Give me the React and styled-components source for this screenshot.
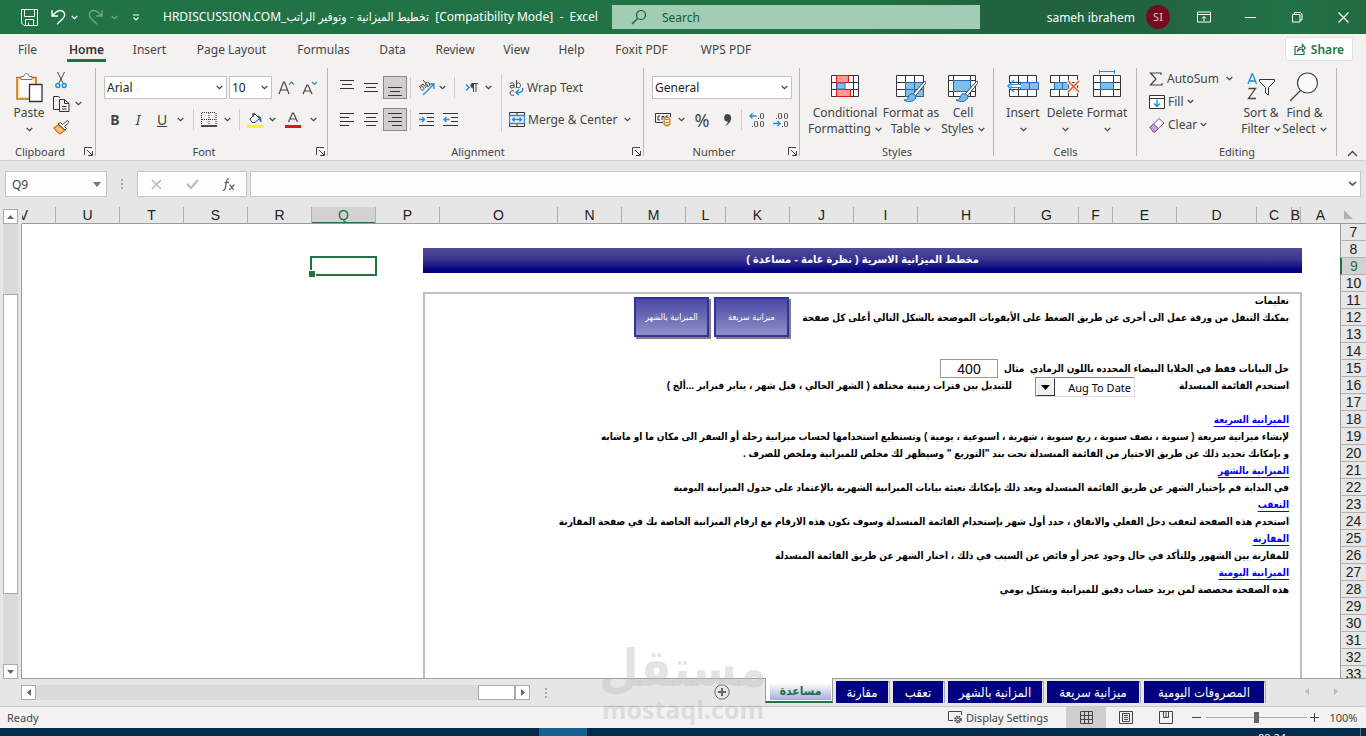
import React from "react";
import styled, { createGlobalStyle, css } from "styled-components";

const ui = '"Noto Sans", "DejaVu Sans Condensed", "DejaVu Sans", sans-serif';
const cellFont = '"Liberation Sans", "DejaVu Sans Condensed", "DejaVu Sans", sans-serif';
const ink = "#444";
const blue = "#1e8bdc";

const Global = createGlobalStyle`
  * { box-sizing: border-box; }
  body { margin: 0; font-family: ${ui}; font-size: 12px; color: ${ink}; }
  button, input, select { font: inherit; color: inherit; margin: 0; padding: 0; border: 0; background: none; outline: 0; border-radius: 0; }
  select { appearance: none; }
  svg { display: block; flex: none; }
  a { color: inherit; text-decoration: none; }
`;

const Window = styled.div`
  display: flex;
  flex-direction: column;
  height: 100vh;
  overflow: hidden;
  background: #e6e6e6;
`;

/* ---------- title bar ---------- */
const TitleBar = styled.header`
  flex: none;
  display: flex;
  align-items: center;
  height: 34px;
  color: #fff;
  background: linear-gradient(90deg, #217346 62%, #22633f 72%, #22633f 84%, #217346 94%, #22693f);
`;
const QuickTools = styled.div`
  display: flex;
  flex: none;
  align-items: center;
  padding-left: 10px;
  width: 163px;
`;
const PlainButton = styled.button`
  display: flex;
  align-items: center;
  justify-content: center;
  flex: none;
  width: ${(p) => p.$w || 20}px;
  height: ${(p) => p.$h || 22}px;
  opacity: ${(p) => (p.$dim ? 0.35 : 1)};
`;
const DocTitle = styled.h1`
  margin: 0;
  flex: 0 0 449px;
  font-size: 12px;
  line-height: 20px;
  font-weight: 400;
  white-space: pre;
`;
const SearchBox = styled.label`
  display: flex;
  align-items: center;
  flex: 1 1 368px;
  max-width: 640px;
  height: 24px;
  padding-left: 19px;
  gap: 15px;
  background: #a0cdb4;
  color: #0e5c2f;
  input { flex: 1; min-width: 0; }
  input::placeholder { color: #0e5c2f; opacity: 1; }
`;
const Account = styled.div`
  flex: 0 0 190px;
  margin-left: auto;
  display: flex;
  align-items: center;
  justify-content: flex-end;
  gap: 11px;
`;
const Avatar = styled.span`
  width: 24px;
  height: 24px;
  border-radius: 50%;
  background: #750b1c;
  line-height: 24px;
  font-size: 11px;
  text-align: center;
  color: #e3c4c8;
`;
const WindowTools = styled.div`
  display: flex;
  flex: none;
  padding-left: 11px;
`;

/* ---------- ribbon tabs ---------- */
const TabRow = styled.nav`
  flex: none;
  display: flex;
  align-items: center;
  height: 32px;
  padding: 0 13px 0 16px;
  background: #f3f2f1;
`;
const RibbonTab = styled.a`
  display: flex;
  justify-content: center;
  width: ${(p) => p.$w}px;
  margin-right: 28px;
  height: 24px;
  line-height: 24px;
  white-space: nowrap;
  font-weight: ${(p) => (p.$active ? 600 : 400)};
  color: ${(p) => (p.$active ? "#333" : ink)};
  border-bottom: 3px solid ${(p) => (p.$active ? "#217346" : "transparent")};
`;
const ShareButton = styled.button`
  display: flex;
  align-items: center;
  justify-content: center;
  gap: 5px;
  margin-left: auto;
  width: 68px;
  height: 24px;
  margin-bottom: 2px;
  background: #fff;
  border: 1px solid #e1dfdd;
  border-radius: 3px;
  font-weight: 600;
  color: #217346;
`;

/* ---------- ribbon ---------- */
const Ribbon = styled.section`
  flex: none;
  display: flex;
  height: 95px;
  background: #f3f2f1;
  border-bottom: 1px solid #cfcdcb;
`;
const Group = styled.div`
  display: flex;
  flex-direction: column;
  flex: none;
  position: relative;
  width: ${(p) => p.$w}px;
  &::after {
    content: "";
    position: absolute;
    right: 0;
    top: 2px;
    bottom: 4px;
    border-right: 1px solid #b9b7b5;
  }
`;
const GroupBody = styled.div`
  flex: 1;
  display: flex;
  padding-left: ${(p) => p.$pad || 0}px;
`;
const GroupFoot = styled.div`
  display: flex;
  align-items: center;
  height: 17px;
  font-size: 11px;
  span { flex: 1; text-align: center; }
`;
const Rows = styled.div`
  display: flex;
  flex-direction: column;
  gap: ${(p) => (p.$gap === undefined ? 9 : p.$gap)}px;
  padding-top: ${(p) => (p.$top === undefined ? 10 : p.$top)}px;
`;
const Row = styled.div`
  display: flex;
  align-items: center;
  height: 23px;
  gap: ${(p) => p.$gap || 0}px;
`;
const Tool = styled(PlainButton)`
  height: 23px;
  width: ${(p) => p.$w || 24}px;
  font-size: ${(p) => p.$size || 14}px;
  ${(p) =>
    p.$pressed &&
    css`
      background: #d2d0ce;
      border: 1px solid #8f858f;
    `}
`;
const Split = styled.span`
  flex: none;
  width: 1px;
  height: ${(p) => p.$h || 21}px;
  margin: ${(p) => p.$top || 0}px ${(p) => p.$r || 6}px 0 ${(p) => p.$l || 6}px;
  background: #d0cecc;
`;
const PickerBox = styled.label`
  display: flex;
  align-items: center;
  flex: none;
  width: ${(p) => p.$w}px;
  height: 23px;
  padding: 0 3px 0 2px;
  background: #fff;
  border: 1px solid #c4c2c0;
  color: #222;
  select { flex: 1; min-width: 0; }
`;
const TextTool = styled.button`
  display: flex;
  align-items: center;
  height: 23px;
  gap: ${(p) => p.$gap || 3}px;
  white-space: nowrap;
`;
const BigTool = styled.button`
  display: flex;
  flex-direction: column;
  align-items: center;
  flex: none;
  width: ${(p) => p.$w}px;
  height: 74px;
  line-height: 16px;
  white-space: nowrap;
`;
const BigArt = styled.span`
  display: flex;
  justify-content: center;
  height: 39px;
  padding-top: ${(p) => p.$top}px;
`;
const BigLine = styled.span`
  display: flex;
  align-items: center;
  gap: 4px;
  min-height: 16px;
`;
const Collapse = styled.button`
  margin-left: auto;
  align-self: flex-end;
  width: 28px;
  height: 14px;
  display: flex;
  justify-content: center;
  align-items: center;
`;

/* ---------- formula bar ---------- */
const FormulaBar = styled.section`
  flex: none;
  display: flex;
  height: 46px;
  padding: 10px 5px 10px 5px;
`;
const Field = styled.div`
  display: flex;
  align-items: center;
  border: 1px solid #c6c6c6;
  background: #fdfdfd;
  width: ${(p) => p.$w || "auto"};
  flex: ${(p) => (p.$w ? "none" : 1)};
  input { flex: 1; min-width: 0; padding-left: 6px; }
`;
const Grip = styled.span`
  display: flex;
  flex-direction: column;
  justify-content: center;
  align-items: center;
  gap: 2px;
  width: ${(p) => p.$w}px;
  i { width: 2px; height: 2px; background: #aaa; }
`;

/* ---------- sheet ---------- */
const WorkArea = styled.main`
  flex: 1;
  min-height: 0;
  display: flex;
`;
const VScroll = styled.div`
  flex: none;
  width: 21px;
  padding: 2px 3px 0;
  display: flex;
  flex-direction: column;
`;
const ScrollButton = styled.button`
  flex: none;
  width: 15px;
  height: 15px;
  display: flex;
  align-items: center;
  justify-content: center;
  background: #fff;
  border: 1px solid #ababab;
`;
const Track = styled.div`
  flex: 1;
  display: flex;
  flex-direction: ${(p) => (p.$vertical ? "column" : "row")};
  justify-content: ${(p) => (p.$vertical ? "flex-start" : "flex-end")};
  background: #dadad9;
  padding-top: ${(p) => (p.$vertical ? 70 : 0)}px;
`;
const Thumb = styled.span`
  background: #fff;
  border: 1px solid #ababab;
  width: ${(p) => p.$w}px;
  height: ${(p) => p.$h};
`;
const SheetPane = styled.div`
  flex: 1;
  min-width: 0;
  display: flex;
  flex-direction: column;
  direction: rtl;
`;
const ColumnHeads = styled.div`
  flex: none;
  display: flex;
  height: 17px;
  margin-left: 1px;
  overflow: hidden;
  border-bottom: 1px solid #9b9b9b;
`;
const ColumnHead = styled.div`
  flex: none;
  width: ${(p) => p.$w}px;
  height: 17px;
  border-left: 1px solid #b1b1b1;
  font: 14px/17px ${cellFont};
  text-align: center;
  color: #222;
  ${(p) =>
    p.$on &&
    css`
      background: #d2d2d2;
      color: #217346;
      box-shadow: inset 0 -2px #217346;
    `}
`;
const Canvas = styled.div`
  flex: 1;
  min-height: 0;
  position: relative;
  overflow: hidden;
  display: flex;
  flex-direction: column;
  padding: 24px 38px 0 0;
  background: #fff;
  border-left: 1px solid #9b9b9b;
  border-bottom: 1px solid #9b9b9b;
  color: #000;
  font-family: ${cellFont};
`;
const Selection = styled.div`
  position: absolute;
  right: 963px;
  top: 32px;
  width: 67px;
  height: 20px;
  border: 2px solid #217346;
  &::after {
    content: "";
    position: absolute;
    left: -3px;
    bottom: -3px;
    width: 6px;
    height: 6px;
    background: #217346;
    border: 1px solid #fff;
    border-width: 1px 1px 0 0;
  }
`;
const Banner = styled.h2`
  flex: none;
  margin: 0;
  width: 879px;
  height: 25px;
  line-height: 23px;
  font-size: 11px;
  font-weight: 700;
  text-align: center;
  color: #fff;
  background: linear-gradient(#544a9c, #3a3590 45%, #000080 90%);
`;
const HelpBox = styled.article`
  flex: 1 0 auto;
  width: 879px;
  margin-top: 19px;
  padding: 0 11px 0 0;
  border: 2px solid #bfbfbf;
  border-bottom: 0;
  font-size: 10px;
  font-weight: 700;
`;
const Line = styled.p`
  display: flex;
  align-items: ${(p) => (p.$top ? "flex-start" : "center")};
  margin: 0;
  height: 17px;
  line-height: 17px;
  white-space: pre;
`;
const Intro = styled.div`
  display: flex;
  height: 66px;
`;
const IntroText = styled.div`
  width: 498px;
  margin-top: -2px;
`;
const NavShape = styled.button`
  margin: 3px 2px 0 3px;
  width: 75px;
  height: 40px;
  border: 2px solid #333399;
  background: linear-gradient(#4a48a4, #8f8fc8);
  box-shadow: 2px 2px #808080;
  color: #fff;
  font-size: 9px;
  font-weight: 400;
`;
const Slot = styled.span`
  flex: none;
  width: ${(p) => p.$w}px;
`;
const SampleInput = styled.input`
  width: 58px;
  height: 19px;
  border: 1px solid #999;
  background: #fff;
  text-align: center;
  font: 400 14px ${cellFont};
`;
const PeriodBox = styled.label`
  display: flex;
  direction: ltr;
  flex: none;
  width: 100px;
  height: 20px;
  margin-left: 23px;
  border: 1px solid #888;
  border-right-color: #ddd;
  border-bottom-color: #ddd;
  background: #fff;
  select { flex: 1; min-width: 0; text-align: right; padding-right: 3px; font: 400 11px ${ui}; color: #000; }
`;
const PeriodArrow = styled.span`
  width: 19px;
  display: flex;
  align-items: center;
  justify-content: center;
  background: #f0f0f0;
  border: 1px solid #fff;
  border-right-color: #333;
  border-bottom-color: #333;
`;
const HelpLink = styled.a`
  color: #0000ff;
  text-decoration: underline;
  text-underline-offset: 3px;
`;
const RowHeads = styled.div`
  flex: none;
  width: 26px;
  overflow: hidden;
  border-bottom: 1px solid #9b9b9b;
`;
const Corner = styled.div`
  display: flex;
  align-items: flex-end;
  height: 17px;
  padding: 0 0 4px 4px;
  border-bottom: 1px solid #9b9b9b;
`;
const RowHead = styled.div`
  height: 17px;
  border-bottom: 1px solid #b1b1b1;
  border-left: ${(p) => (p.$on ? "2px solid #217346" : "1px solid #9b9b9b")};
  background: ${(p) => (p.$on ? "#d2d2d2" : "#e6e6e6")};
  color: ${(p) => (p.$on ? "#217346" : "#222")};
  font: 14px/17px ${cellFont};
  text-align: center;
`;

/* ---------- sheet tabs ---------- */
const SheetBar = styled.section`
  flex: none;
  display: flex;
  position: relative;
  height: 28px;
  padding-left: 21px;
  border-bottom: 1px solid #c6c6c6;
`;
const HScroll = styled.div`
  display: flex;
  width: 509px;
  height: 15px;
  margin-top: 6px;
`;
const AddSheet = styled.button`
  display: flex;
  margin: 5px 35px 0 auto;
  height: 16px;
`;
const SheetTabs = styled.div`
  display: flex;
  height: 25px;
  margin-top: -1px;
`;
const SheetTab = styled.button`
  width: ${(p) => p.$w}px;
  height: 22px;
  margin: 3px 1px 0 3px;
  background: #000080;
  color: #fff;
  font: 13px/20px ${ui};
  & + & { margin-left: 4px; }
  box-shadow: 2px 1px 0 -1px #e6e6e6, 2px 0 0 0 #aaa;
`;
const ActiveTab = styled.button`
  width: 68px;
  height: 25px;
  padding: 4px 1px 1px 4px;
  background: #fff;
  border: 1px solid #9b9b9b;
  border-top: 0;
  border-bottom: 2px solid #217346;
  color: #217346;
  font-weight: 700;
  span {
    display: block;
    height: 17px;
    line-height: 16px;
    background: linear-gradient(#fff, #b0aede 95%);
  }
`;
const SheetNav = styled.div`
  display: flex;
  width: 101px;
  padding: 9px 28px 0 40px;
  justify-content: space-between;
`;

/* ---------- status bar ---------- */
const StatusBar = styled.footer`
  flex: none;
  display: flex;
  align-items: center;
  height: 21px;
  padding-left: 7px;
  background: #f3f2f1;
  font-size: 11px;
`;
const DisplaySettings = styled.button`
  display: flex;
  align-items: center;
  gap: 3px;
  margin: 0 17px 0 auto;
  width: 101px;
  white-space: nowrap;
`;
const ViewButton = styled.button`
  display: flex;
  align-items: center;
  justify-content: center;
  width: 40px;
  height: 21px;
  background: ${(p) => (p.$on ? "#d0cfcd" : "none")};
`;
const ZoomSlider = styled.input.attrs({ type: "range" })`
  && { appearance: none; width: 101px; height: 14px; }
  &::-webkit-slider-runnable-track { height: 1px; background: #aaa; }
  &::-webkit-slider-thumb { appearance: none; width: 5px; height: 11px; margin-top: -5px; background: #666; }
`;
const ZoomValue = styled.span`
  width: 45px;
  text-align: center;
`;
const Taskbar = styled.div`
  flex: none;
  display: flex;
  height: 8px;
  overflow: hidden;
  padding: 0 5px 0 539px;
  background: #002b4a;
`;
const RunningApp = styled.span`
  width: 48px;
  background: #15608c;
`;
const Clock = styled.time`
  margin-left: auto;
  width: 103px;
  padding-top: 3px;
  border-right: 1px solid #5b7488;
  font-size: 11px;
  line-height: 13px;
  color: #fff;
`;

/* ---------- watermark ---------- */
const Watermark = styled.div`
  position: absolute;
  left: 599px;
  bottom: -14px;
  width: 168px;
  display: flex;
  flex-direction: column;
  align-items: center;
  color: rgba(190, 190, 190, 0.42);
  pointer-events: none;
  b { font: 700 51px/58px "DejaVu Sans Condensed", "DejaVu Sans", sans-serif; }
  span { font: 700 25px/22px "Open Sans", sans-serif; }
`;

/* ---------- icons ---------- */
const Svg = ({ w, h, children, c = ink, s = 1 }) => (
  <svg width={w} height={h} viewBox={`0 0 ${w} ${h}`} fill="none" stroke={c} strokeWidth={s} aria-hidden="true">
    {children}
  </svg>
);
const Chev = ({ c = ink }) => (
  <Svg w={7} h={5} c={c} s={1.2}><path d="M.7 1 3.5 3.6 6.3 1" /></Svg>
);
const Tri = ({ d, w = 7, h = 7, c = "#666" }) => (
  <svg width={w} height={h} viewBox={`0 0 ${w} ${h}`} aria-hidden="true"><path d={d} fill={c} /></svg>
);
const Drop = ({ label, w = 12 }) => <Tool $w={w} aria-label={label}><Chev /></Tool>;
const Launcher = ({ label }) => (
  <PlainButton $w={16} $h={16} aria-label={label}>
    <Svg w={9} h={9}><path d="M.5 8V.5H8M3 3l5 5M8.500 4v4.500H4" /></Svg>
  </PlainButton>
);
const Bars = ({ rows, y = 1 }) => (
  <Svg w={16} h={16} c="#333">
    {rows.map(([a, b], i) => <path key={i} d={`M${a} ${y + i * 4 + 0.5}H${b}`} />)}
  </Svg>
);
const SaveIcon = () => (
  <Svg w={17} h={17} c="#fff"><path d="M.5.500h16v16H3l-2.500-2.500zM3.500.5v7h10v-7M4.500 16.500v-6h8v6M7.500 16.500v-3" /></Svg>
);
const UndoIcon = () => (
  <Svg w={15} h={16} c="#fff" s={1.4}><path d="M1 1v6h6M1.500 6.500 5 3.200C8 .5 12 1 13.300 4c1 2.500 0 4-1.500 5.500L6 15.300" /></Svg>
);
const RedoIcon = () => (
  <Svg w={15} h={16} c="#fff" s={1.4}><path d="M14 1v6H8M13.500 6.500 10 3.200C7 .5 3 1 1.700 4c-1 2.500 0 4 1.500 5.500L9 15.300" /></Svg>
);
const PasteIcon = () => (
  <Svg w={28} h={31}>
    <path d="M2 5.500h19V27H2z" fill="#fbe3a6" stroke="#c66f0e" strokeWidth="1.500" />
    <path d="M4.500 7h14v18h-14z" fill="#fafafa" stroke="none" />
    <path d="M6 7.500V4.500h3c0-4 5-4 5 0h3v3z" fill="#fff" stroke="#777" />
    <path d="M14.500 12.500h12.500v17H14.500z" fill="#fff" stroke="#333" strokeWidth="1.300" />
  </Svg>
);
const ScissorsIcon = () => (
  <Svg w={12} h={17}><path d="M2.500 0 8 11M9.500 0 4 11" /><circle cx="2.800" cy="13.500" r="2" stroke={blue} strokeWidth="1.400" /><circle cx="9.200" cy="13.500" r="2" stroke={blue} strokeWidth="1.400" /></Svg>
);
const CopyIcon = () => (
  <Svg w={17} h={16} c="#333"><path d="M6 13.500H.5V.5h5l1.500 1M6.500 3.500h5l4.500 4v8H6.500zM11.500 3.500v4H16M9 10.500h4.500M9 13h4.500" /></Svg>
);
const PainterIcon = () => (
  <Svg w={17} h={16}><path d="m5 6-4 3c2 3 3 4 6 6l5-4z" fill="#f7c377" stroke="#d9730d" strokeWidth="1.300" /><path d="m5 5 7 6 1.500-1.500-2-2L16 3.500 14.500 1.500 9.500 5.500l-2-2z" fill="#fff" /></Svg>
);
const BordersIcon = () => (
  <Svg w={16} h={15} c="#333"><path d="M1 .5h14M1 7.500h14M.5 1v12M8 1v12M15 1v12" strokeDasharray="1 1" /><path d="M0 14h16" strokeWidth="1.500" stroke="#111" /></Svg>
);
const FillIcon = () => (
  <Svg w={17} h={16}><path d="m3 7 5-5 4.500 4.500L8 10.500H5zM6 1v4M5 3l3-2" /><path d="M11 4c3 0 3 3 3 6l-2-3" fill="#2b6cb0" stroke="#2b6cb0" /><path d="M0 13h16v3H0z" fill="#ffff00" stroke="none" /></Svg>
);
const FontColorIcon = () => (
  <Svg w={16} h={16}><path d="m3.500 10 4-9h1l4 9M5 7h6" strokeWidth="1.200" /><path d="M0 13h16v3H0z" fill="#e81010" stroke="none" /></Svg>
);
const GrowIcon = ({ small }) => (
  <Svg w={17} h={16} s={1.200}>
    {small ? <><path d="m1 14 4-9h1l4 9M2.500 11h6" /><path d="M10 2l2.500 2.500L15 2" stroke={blue} /></> : <><path d="m1 14 4.500-12h1L11 14M2.700 10h7" /><path d="M11 4.500 13.500 2 16 4.500" stroke={blue} /></>}
  </Svg>
);
const OrientIcon = () => (
  <Svg w={17} h={16}><path d="M5 15 15.500 4.500M11 4h5v5" stroke={blue} strokeWidth="1.300" /><path d="m1 7 4-3 3 4M3 9.500c-2-2 1-4 2.500-2s-1 4-2.500 2M5 0l5 6M8 3c2-2 5 1 3 3s-4-1-3-3" /></Svg>
);
const ParaIcon = () => (
  <Svg w={13} h={10}><path d="m1 1.500 3 3-3 3" stroke={blue} strokeWidth="1.400" /><path d="M8.500 0v9M11 0v9M7 .5h6" /><path d="M8.500 0v5C5 5 5 0 8.500 0" fill={ink} /></Svg>
);
const IndentIcon = ({ left }) => (
  <Svg w={15} h={14}><path d="M0 .5h15M8 4.500h7M8 8.500h7M0 12.500h15" stroke="#333" /><path d={left ? "M6.500 6.500H1M3.500 4 1 6.500 3.500 9" : "M0 6.500h5.500M3 4l2.500 2.500L3 9"} stroke={blue} strokeWidth="1.300" /></Svg>
);
const WrapIcon = () => (
  <Svg w={15} h={16}><path d="M1 3.500c2-1.500 4-.5 4 1V8M5 5.500C2.500 5 1 5.500 1 6.700 1 8.500 4 8.500 5 6.500M7.500 0v8M7.500 4c1.500-2 4-1 4 1.500s-2.500 3-4 1M5 11c-2-1-4 0-4 2s2 3 4 2" /><path d="M13.500 8c1 3-1 5-6 4.500M10 9.500l-3 3 3 2.500" stroke={blue} strokeWidth="1.400" /></Svg>
);
const MergeIcon = () => (
  <Svg w={16} h={15}><path d="M.5 3V.5h15V3M8 .5V3M.5 12v2.500h15V12M8 12v2.500" stroke="#333" /><path d="M.5 3.500h15v8H.5zM3.500 7.500h9M5.500 5.500l-2 2 2 2M10.500 5.500l2 2-2 2" stroke={blue} strokeWidth="1.300" /></Svg>
);
const MoneyIcon = () => (
  <Svg w={17} h={15}><path d="M8 10.500H.5v-9h15V5M3 4v4M5 4H3M5 8H3M7 8V4.500h2V6M11 5V4h2" stroke="#333" /><path d="M9 6.500v6c1 2 5 2 6 0v-6c-1-1.500-5-1.500-6 0 1 1.500 5 1.500 6 0M9 9.500c1 1.500 5 1.500 6 0M9 12c1 1.500 5 1.500 6 0" stroke="#c66f0e" fill="#fff1d6" /></Svg>
);
const Digit = ({ x, y }) => <rect x={x} y={y} width="3" height="5" rx="1" stroke={ink} />;
const DecimalIcon = ({ less }) => (
  <Svg w={17} h={16}>
    {less ? <><path d="M3 6.500h1M9 14.500h1" /><Digit x="5.500" y="1.500" /><Digit x="11.500" y="1.500" /><Digit x="11.500" y="9.500" /><path d="M0 11.500h7M4.500 9 7 11.500 4.500 14" stroke={blue} strokeWidth="1.300" /></> : <><path d="M9 6.500h1M3 14.500h1" /><Digit x="11.500" y="1.500" /><Digit x="5.500" y="9.500" /><Digit x="11.500" y="9.500" /><path d="M7.500 4H1M3.500 1.500 1 4l2.500 2.500" stroke={blue} strokeWidth="1.300" /></>}
  </Svg>
);
const TableBase = () => <path d="M.5.500h27v21H.5zM.5 7.500h27M.5 14.500h27M9.500.5v21M18.500.5v21" stroke="#333" fill="#fff" />;
const CondIcon = () => (
  <Svg w={28} h={22}><path d="M.5.500h27v21H.5zM.5 7.500h27M.5 14.500h27M5.500.5v21M22.500.5v21" stroke="#333" fill="#fff" /><path d="M5.500.5h12v7h-12zM5.500 14.500h14v7h-14z" fill="#ff9a94" stroke="#e81010" /><path d="M6 8h8v6H6z" fill="#84bdea" stroke="#2b7cc4" /></Svg>
);
const Brush = () => (
  <g><path d="M28.500 6.500 17 19l2.500 2L29.500 8.500c1-1.500 0-3-1-2z" fill="#fff" stroke="#444" /><path d="M17.500 19c-4-1-5 1.500-5.500 4-.5 1.500-2 2-4 2 4 3 12 2 12-4z" fill="#7db8e8" stroke="#1b6db5" /></g>
);
const FormatTableIcon = () => (
  <Svg w={30} h={27}><TableBase /><path d="M9.500 7.500h18v14h-18zM9.500 14.500h18M18.500 7.500v14" fill="#84bdea" stroke="#1b6db5" /><Brush /></Svg>
);
const CellStylesIcon = () => (
  <Svg w={30} h={27}><path d="M.5.500h27v21H.5zM.5 5.500h27M.5 16.500h27M5.500.5v21M22.500.5v21" stroke="#333" fill="#fff" /><path d="M5.500 5.500h17v11h-17z" fill="#84bdea" stroke="#1b6db5" /><Brush /></Svg>
);
const InsertIcon = () => (
  <Svg w={32} h={22}><g transform="translate(2 0)"><TableBase /></g><path d="M13.500 7.500h18v7h-18zM22.500 7.500v7" fill="#84bdea" stroke="#1b6db5" /><path d="M0 8h3v6H0z" fill="#f3f2f1" stroke="none" /><path d="M14 9.500H4v3h10" fill="#fff" stroke={blue} /><path d="M7 5 1 11l6 6" stroke={blue} strokeWidth="1.400" /></Svg>
);
const DeleteIcon = () => (
  <Svg w={30} h={22}><TableBase /><path d="M0 8h4v6H0z" fill="#f3f2f1" stroke="none" /><path d="M4.500 7.500h14v7h-14zM12.500 7.500v7" fill="#84bdea" stroke="#1b6db5" /><path d="m18 6 11 11M29 6 18 17" stroke="#f3f2f1" strokeWidth="4" /><path d="m18 6 11 11M29 6 18 17" stroke="#e8601f" strokeWidth="1.600" /></Svg>
);
const FormatIcon = () => (
  <Svg w={28} h={27}><path d="M6.500 0v4M21.500 0v4M6.500 1.500h15" stroke={blue} /><g transform="translate(0 5)"><path d="M.5.500h27v21H.5zM.5 7.500h27M.5 14.500h27M7.500.5v21M20.500.5v21" stroke="#333" fill="#fff" /><path d="M7.500 7.500h13v7h-13z" fill="#84bdea" stroke="#1b6db5" /></g></Svg>
);
const SumIcon = () => <Svg w={14} h={14} s={1.200}><path d="M12 3V1H1.500L7 7l-5.500 6H13v-2" /></Svg>;
const FillDownIcon = () => <Svg w={16} h={14}><path d="M.5.500h15v13H.5zM.5 3.500h15" stroke="#333" fill="#fff" /><path d="M8 4.500V11M5 8.500l3 3 3-3" stroke={blue} strokeWidth="1.400" /></Svg>;
const EraserIcon = () => <Svg w={16} h={16}><path d="m1 10.500 9-9 5 4.500-9 9H4.500z" fill="#fff" stroke="#944c7c" /><path d="m1 10.500 3.500-3.500 5 4.500L6 15H4.500z" fill="#cda3dc" stroke="#7b4fa0" /></Svg>;
const SortIcon = () => (
  <Svg w={28} h={27}><path d="m1 11 4-10h.5L9.500 11M2.500 8h6" stroke={blue} strokeWidth="1.300" /><path d="M1.500 15.500h7L1.500 25.500h7.500" strokeWidth="1.300" /><path d="M12.500 6.500h15v2l-6 6v7.500l-3-2v-5.500l-6-6z" fill="#fff" stroke="#333" /></Svg>
);
const FindIcon = () => <Svg w={30} h={30} s={1.200}><circle cx="18.500" cy="11" r="10" fill="#fafafa" /><path d="M11.500 18.500 1 29" /></Svg>;
const PresenterIcon = () => <Svg w={14} h={12} c="#fff"><path d="M.5 1h13v10H.5zM.5 3.500h13M7 10V5.500M5 7.500l2-2 2 2" /></Svg>;
const ShareIcon = () => <Svg w={12} h={12} c="#217346" s={1.200}><path d="M4 3.500H1v8h9V8M3.500 8c.5-3 2-4 5-4V1.500L11.500 5 8.500 8V6c-2 0-3.500.5-5 2z" /></Svg>;

const tabs = [["File", 23], ["Home", 39], ["Insert", 31], ["Page Layout", 77], ["Formulas", 51], ["Data", 31], ["Review", 38], ["View", 29], ["Help", 25], ["Foxit PDF", 59], ["WPS PDF", 54]];
const columns = [["A", 40], ["B", 9], ["C", 35], ["D", 80], ["E", 64], ["F", 34], ["G", 64], ["H", 97], ["I", 64], ["J", 64], ["K", 64], ["L", 40], ["M", 64], ["N", 64], ["O", 118], ["P", 64], ["Q", 64], ["R", 64], ["S", 64], ["T", 64], ["U", 64], ["V", 64]];
const rows = Array.from({ length: 27 }, (_, i) => i + 7);
const help = [
  ["الميزانية السريعة", true],
  ["لإنشاء ميزانية سريعة ( سنوية ، نصف سنوية ، ربع سنوية ، شهرية ، اسبوعية ، يومية ) وتستطيع استخدامها لحساب ميزانية رحلة أو السفر الى مكان ما او ماشابه"],
  ["و بإمكانك تحديد ذلك عن طريق الاختيار من القائمة المنسدلة تحت بند \"التوزيع \" وسيظهر لك مخلص للميزانية وملخص للصرف ."],
  ["الميزانية بالشهر", true],
  ["في البداية قم بإختيار الشهر عن طريق القائمة المنسدلة وبعد ذلك بإمكانك تعبئة بيانات الميزانية الشهرية بالإعتماد على جدول الميزانية اليومية"],
  ["التعقب", true],
  ["استخدم هذه الصفحة لتعقب دخل الفعلي والانفاق ، حدد أول شهر بإستخدام القائمة المنسدلة وسوف تكون هذه الارقام مع ارقام الميزانية الخاصة بك في صفحة المقارنة"],
  ["المقارنة", true],
  ["للمقارنة بين الشهور وللتأكد في حال وجود عجز أو فائض عن السبب في ذلك ، اختار الشهر عن طريق القائمة المنسدلة"],
  ["الميزانية اليومية", true],
  ["هذه الصفحة مخصصة لمن يريد حساب دقيق للميزانية وبشكل يومي"],
];
const sheets = [["مقارنة", 52], ["تعقب", 50], ["المزانية بالشهر", 94], ["ميزانية سريعة", 92], ["المصروفات اليومية", 120]];

const Picker = ({ w, label, value }) => (
  <PickerBox $w={w}>
    <select aria-label={label} defaultValue={value}><option>{value}</option></select>
    <Chev />
  </PickerBox>
);
const Big = ({ w, icon, lines, top = 9 }) => (
  <BigTool $w={w}>
    <BigArt $top={top}>{icon}</BigArt>
    <BigLine>{lines[0]}</BigLine>
    <BigLine>{lines[1]}<Chev /></BigLine>
  </BigTool>
);

export default function App() {
  return (
    <Window>
      <Global />
      <TitleBar>
        <QuickTools>
          <PlainButton $w={38} aria-label="Save"><SaveIcon /></PlainButton>
          <PlainButton $w={20} aria-label="Undo"><UndoIcon /></PlainButton>
          <PlainButton $w={12} aria-label="Undo history"><Chev c="#fff" /></PlainButton>
          <PlainButton $w={30} $dim aria-label="Redo"><RedoIcon /></PlainButton>
          <PlainButton $w={8} $dim aria-label="Redo history"><Chev c="#fff" /></PlainButton>
          <PlainButton $w={36} aria-label="Customize toolbar"><Svg w={8} h={7} c="#fff" s={1.200}><path d="M1 1h6M1.500 3.500 4 6l2.500-2.500" /></Svg></PlainButton>
        </QuickTools>
        <DocTitle>{"HRDISCUSSION.COM_تخطيط الميزانية - وتوفير الراتب  [Compatibility Mode]  -  Excel"}</DocTitle>
        <SearchBox>
          <Svg w={16} h={16} c="#0e5c2f" s={1.200}><circle cx="10" cy="6" r="4.500" /><path d="M6.500 9.500 1 15" /></Svg>
          <input placeholder="Search" aria-label="Search" />
        </SearchBox>
        <Account>sameh ibrahem <Avatar>SI</Avatar></Account>
        <WindowTools>
          <PlainButton $w={46} aria-label="Ribbon display"><PresenterIcon /></PlainButton>
          <PlainButton $w={47} aria-label="Minimize"><Svg w={11} h={3} c="#fff"><path d="M0 1.500h11" /></Svg></PlainButton>
          <PlainButton $w={46} aria-label="Restore"><Svg w={11} h={11} c="#fff"><path d="M.5 2.500h7.500v7.500H.5zM2.500 2.500V.5h6l1.500 1.500v6H8" /></Svg></PlainButton>
          <PlainButton $w={46} aria-label="Close"><Svg w={11} h={11} c="#fff" s={1.200}><path d="m.5.500 10 10M10.500.5l-10 10" /></Svg></PlainButton>
        </WindowTools>
      </TitleBar>

      <TabRow>
        {tabs.map(([t, w]) => <RibbonTab key={t} href="#" $w={w} $active={t === "Home"}>{t}</RibbonTab>)}
        <ShareButton><ShareIcon />Share</ShareButton>
      </TabRow>

      <Ribbon>
        <Group $w={96}>
          <GroupBody $pad={8}>
            <Big w={42} top={6} icon={<PasteIcon />} lines={["Paste", ""]} />
            <Rows $top={3} $gap={0}>
              <Row><Tool $w={22} aria-label="Cut"><ScissorsIcon /></Tool></Row>
              <Row><Tool $w={22} aria-label="Copy"><CopyIcon /></Tool><Drop label="Copy options" /></Row>
              <Row><Tool $w={22} aria-label="Format painter"><PainterIcon /></Tool></Row>
            </Rows>
          </GroupBody>
          <GroupFoot><span>Clipboard</span><Launcher label="Clipboard settings" /></GroupFoot>
        </Group>

        <Group $w={232}>
          <GroupBody $pad={8}>
            <Rows>
              <Row $gap={2}>
                <Picker w={123} label="Font" value="Arial" />
                <Picker w={43} label="Font size" value="10" />
                <Tool $w={24} aria-label="Grow font"><GrowIcon /></Tool>
                <Tool $w={20} aria-label="Shrink font"><GrowIcon small /></Tool>
              </Row>
              <Row>
                <Tool $w={22} aria-label="Bold"><b>B</b></Tool>
                <Tool $w={24} aria-label="Italic"><i>I</i></Tool>
                <Tool $w={24} aria-label="Underline"><u>U</u></Tool>
                <Drop label="Underline style" /><Split $l={7} $r={4} />
                <Tool $w={22} aria-label="Borders"><BordersIcon /></Tool><Drop label="Border style" w={14} /><Split $l={5} $r={4} />
                <Tool $w={23} aria-label="Fill color"><FillIcon /></Tool><Drop label="Fill colors" w={10} />
                <Tool $w={32} aria-label="Font color"><FontColorIcon /></Tool><Drop label="Font colors" w={8} />
              </Row>
            </Rows>
          </GroupBody>
          <GroupFoot><span>Font</span><Launcher label="Font settings" /></GroupFoot>
        </Group>

        <Group $w={316}>
          <GroupBody $pad={7}>
            <Rows>
              <Row>
                <Tool aria-label="Top align"><Bars y={0} rows={[[1, 15], [3, 13], [1, 15]]} /></Tool>
                <Tool aria-label="Middle align"><Bars y={3} rows={[[1, 15], [3, 13], [1, 15]]} /></Tool>
                <Tool $pressed aria-label="Bottom align"><Bars y={7} rows={[[1, 15], [3, 13], [1, 15]]} /></Tool>
                <Split $l={3} $r={4} />
                <Tool $w={22} aria-label="Orientation"><OrientIcon /></Tool><Drop label="Orientations" w={10} />
                <Split $l={7} $r={6} />
                <Tool $w={20} aria-label="Text direction"><ParaIcon /></Tool><Drop label="Directions" w={14} />
              </Row>
              <Row>
                <Tool aria-label="Align left"><Bars rows={[[1, 15], [1, 10], [1, 15], [1, 10]]} /></Tool>
                <Tool aria-label="Center"><Bars rows={[[1, 15], [3, 13], [1, 15], [3, 13]]} /></Tool>
                <Tool $pressed aria-label="Align right"><Bars rows={[[1, 15], [5, 15], [1, 15], [5, 15]]} /></Tool>
                <Split $l={3} $r={4} />
                <Tool $w={22} aria-label="Increase indent"><IndentIcon /></Tool>
                <Tool $w={26} aria-label="Decrease indent"><IndentIcon left /></Tool>
              </Row>
            </Rows>
            <Split $h={58} $top={8} $l={6} $r={7} />
            <Rows>
              <TextTool><WrapIcon />Wrap Text</TextTool>
              <Row><TextTool><MergeIcon />Merge &amp; Center</TextTool><Drop label="Merge options" w={20} /></Row>
            </Rows>
          </GroupBody>
          <GroupFoot><span>Alignment</span><Launcher label="Alignment settings" /></GroupFoot>
        </Group>

        <Group $w={156}>
          <GroupBody $pad={8}>
            <Rows>
              <Picker w={140} label="Number format" value="General" />
              <Row>
                <Tool $w={22} aria-label="Accounting"><MoneyIcon /></Tool><Drop label="Currencies" w={14} />
                <Tool $w={28} $size={18} aria-label="Percent">%</Tool>
                <Tool $w={22} aria-label="Comma"><svg width="9" height="12" viewBox="0 0 9 12"><path d="M4.500 0c5.500 0 5 9-2.500 12C5 9 5 8 4.500 7.500 0 8 0 0 4.500 0" fill="#444" /></svg></Tool>
                <Split $l={3} $r={4} />
                <Tool $w={23} aria-label="Increase decimal"><DecimalIcon /></Tool>
                <Tool aria-label="Decrease decimal"><DecimalIcon less /></Tool>
              </Row>
            </Rows>
          </GroupBody>
          <GroupFoot><span>Number</span><Launcher label="Number settings" /></GroupFoot>
        </Group>

        <Group $w={194}>
          <GroupBody $pad={8}>
            <Big w={74} icon={<CondIcon />} lines={["Conditional", "Formatting"]} />
            <Big w={58} icon={<FormatTableIcon />} lines={["Format as", "Table"]} />
            <Big w={46} icon={<CellStylesIcon />} lines={["Cell", "Styles"]} />
          </GroupBody>
          <GroupFoot><span>Styles</span></GroupFoot>
        </Group>

        <Group $w={143}>
          <GroupBody $pad={8}>
            <Big w={42} icon={<InsertIcon />} lines={["Insert", ""]} />
            <Big w={42} icon={<DeleteIcon />} lines={["Delete", ""]} />
            <Big w={42} top={4} icon={<FormatIcon />} lines={["Format", ""]} />
          </GroupBody>
          <GroupFoot><span>Cells</span></GroupFoot>
        </Group>

        <Group $w={200}>
          <GroupBody $pad={12}>
            <Rows $top={1} $gap={0}>
              <Row><TextTool $gap={4}><SumIcon />AutoSum</TextTool><Drop label="Sum options" w={22} /></Row>
              <TextTool><FillDownIcon />Fill <Chev /></TextTool>
              <TextTool><EraserIcon />Clear <Chev /></TextTool>
            </Rows>
            <Big w={40} top={7} icon={<SortIcon />} lines={["Sort &", "Filter"]} />
            <Big w={47} top={6} icon={<FindIcon />} lines={["Find &", "Select"]} />
          </GroupBody>
          <GroupFoot><span>Editing</span></GroupFoot>
        </Group>
        <Collapse aria-label="Collapse ribbon"><Svg w={11} h={7} s={1.300}><path d="m1 6 4.500-4.500L10 6" /></Svg></Collapse>
      </Ribbon>

      <FormulaBar>
        <Field $w="102px">
          <input defaultValue="Q9" aria-label="Name box" />
          <PlainButton $w={19} aria-label="Names"><Tri w={8} h={5} d="M0 0h8L4 5z" c="#777" /></PlainButton>
        </Field>
        <Grip $w={30}><i /><i /><i /></Grip>
        <Field $w="110px">
          <PlainButton $w={36} aria-label="Cancel"><Svg w={11} h={11} c="#bbb" s={1.600}><path d="m1 1 9 9M10 1 1 10" /></Svg></PlainButton>
          <PlainButton $w={36} aria-label="Enter"><Svg w={13} h={10} c="#bbb" s={2.200}><path d="m1 5 4 4 7-8" /></Svg></PlainButton>
          <PlainButton $w={36} aria-label="Insert function"><Svg w={13} h={13} c="#666" s={1.300}><path d="M7 1C5 .5 5 2 4.500 4L3 11c-.5 1.500-1.500 1.500-2.500 1M2.500 4.500H7M7.500 7c2 0 2 4.500 4.500 4.500M12.500 7c-2 0-3 4.500-5.500 4.500" /></Svg></PlainButton>
        </Field>
        <Slot $w={3} />
        <Field>
          <input aria-label="Formula" />
          <PlainButton $w={15} aria-label="Expand formula bar"><Svg w={9} h={6} c="#666" s={1.800}><path d="M1 1l3.500 3L8 1" /></Svg></PlainButton>
        </Field>
      </FormulaBar>

      <WorkArea>
        <VScroll>
          <ScrollButton aria-label="Scroll up"><Tri h={4} d="M0 4h7L3.500 0z" /></ScrollButton>
          <Track $vertical><Thumb $w={15} $h="81%" /></Track>
          <ScrollButton aria-label="Scroll down"><Tri h={4} d="M0 0h7L3.500 4z" /></ScrollButton>
        </VScroll>
        <SheetPane>
          <ColumnHeads>
            {columns.map(([c, w]) => <ColumnHead key={c} $w={w} $on={c === "Q"}>{c}</ColumnHead>)}
          </ColumnHeads>
          <Canvas>
            <Selection />
            <Banner>مخطط الميزانية الاسرية ( نظرة عامة - مساعدة )</Banner>
            <HelpBox>
              <Intro>
                <IntroText>
                  <Line>تعليمات</Line>
                  <Line>يمكنك التنقل من ورقة عمل الى أخرى عن طريق الضغط على الأيقونات الموضحة بالشكل التالي أعلى كل صفحة</Line>
                </IntroText>
                <NavShape>ميزانية سريعة</NavShape>
                <NavShape>الميزانية بالشهر</NavShape>
              </Intro>
              <Line><Slot $w={291}>خل البيانات فقط في الخلايا البيضاء المحدده باللون الرمادي  مثال</Slot><SampleInput defaultValue="400" aria-label="مثال" /></Line>
              <Line $top>
                <Slot $w={154}>استخدم القائمة المنسدلة</Slot>
                <PeriodBox>
                  <PeriodArrow><Tri w={9} h={5} d="M0 0h9L4.500 5z" c="#000" /></PeriodArrow>
                  <select aria-label="Period" defaultValue="Aug To Date"><option>Aug To Date</option></select>
                </PeriodBox>
                <span>للتبديل بين فترات زمنية مختلفة ( الشهر الحالي ، قبل شهر ، يناير فبراير ...ألخ )</span>
              </Line>
              <Line />
              {help.map(([t, link]) => <Line key={t}>{link ? <HelpLink href="#">{t}</HelpLink> : t}</Line>)}
            </HelpBox>
          </Canvas>
        </SheetPane>
        <RowHeads>
          <Corner><Tri w={9} h={9} d="M0 0v9h9z" c="#b1b1b1" /></Corner>
          {rows.map((r) => <RowHead key={r} $on={r === 9}>{r}</RowHead>)}
        </RowHeads>
      </WorkArea>

      <SheetBar>
        <HScroll>
          <ScrollButton aria-label="Scroll left"><Tri w={4} d="M4 0v7L0 3.500z" /></ScrollButton>
          <Track><Thumb $w={37} $h="15px" /></Track>
          <ScrollButton aria-label="Scroll right"><Tri w={4} d="M0 0v7l4-3.500z" /></ScrollButton>
        </HScroll>
        <Grip $w={32}><i /><i /><i /></Grip>
        <AddSheet aria-label="New sheet"><Svg w={16} h={16} c="#666"><circle cx="8" cy="8" r="7.200" /><path d="M8 4v8M4 8h8" strokeWidth="2" /></Svg></AddSheet>
        <SheetTabs>
          <ActiveTab><span>مساعدة</span></ActiveTab>
          {sheets.map(([t, w]) => <SheetTab key={t} $w={w}>{t}</SheetTab>)}
        </SheetTabs>
        <SheetNav><Tri w={4} d="M4 0v7L0 3.500z" c="#bbb" /><Tri w={4} d="M0 0v7l4-3.500z" c="#bbb" /></SheetNav>
        <Watermark><b>مستقل</b><span>mostaql.com</span></Watermark>
      </SheetBar>

      <StatusBar>
        Ready
        <DisplaySettings><Svg w={15} h={13}><path d="M5 9.500H.5v-9h13V4" /><circle cx="10" cy="8.500" r="3" strokeWidth="1.600" strokeDasharray="1.6 .8" /><circle cx="10" cy="8.500" r="1.500" /></Svg>Display Settings</DisplaySettings>
        <ViewButton $on aria-label="Normal view"><Svg w={13} h={13}><path d="M.5.500h12v12H.5zM.5 4.500h12M.5 8.500h12M4.500.5v12M8.500.5v12" /></Svg></ViewButton>
        <ViewButton aria-label="Page layout view"><Svg w={14} h={13}><path d="M.5.500h13v12H.5zM3.500 2.500h7v8h-7zM5 4.500h4M5 6.500h4M5 8.500h4" /></Svg></ViewButton>
        <ViewButton aria-label="Page break view"><Svg w={14} h={13}><path d="M.5.500h13v12H.5zM4.500.5v6h5v-6M7 .5v6" /></Svg></ViewButton>
        <PlainButton $w={20} $h={20} aria-label="Zoom out"><Svg w={9} h={9}><path d="M0 4.500h9" /></Svg></PlainButton>
        <ZoomSlider defaultValue={50} aria-label="Zoom" />
        <PlainButton $w={14} $h={20} aria-label="Zoom in"><Svg w={9} h={9}><path d="M0 4.500h9M4.500 0v9" /></Svg></PlainButton>
        <ZoomValue>100%</ZoomValue>
      </StatusBar>

      <Taskbar>
        <RunningApp />
        <Clock>08:24</Clock>
      </Taskbar>
    </Window>
  );
}
